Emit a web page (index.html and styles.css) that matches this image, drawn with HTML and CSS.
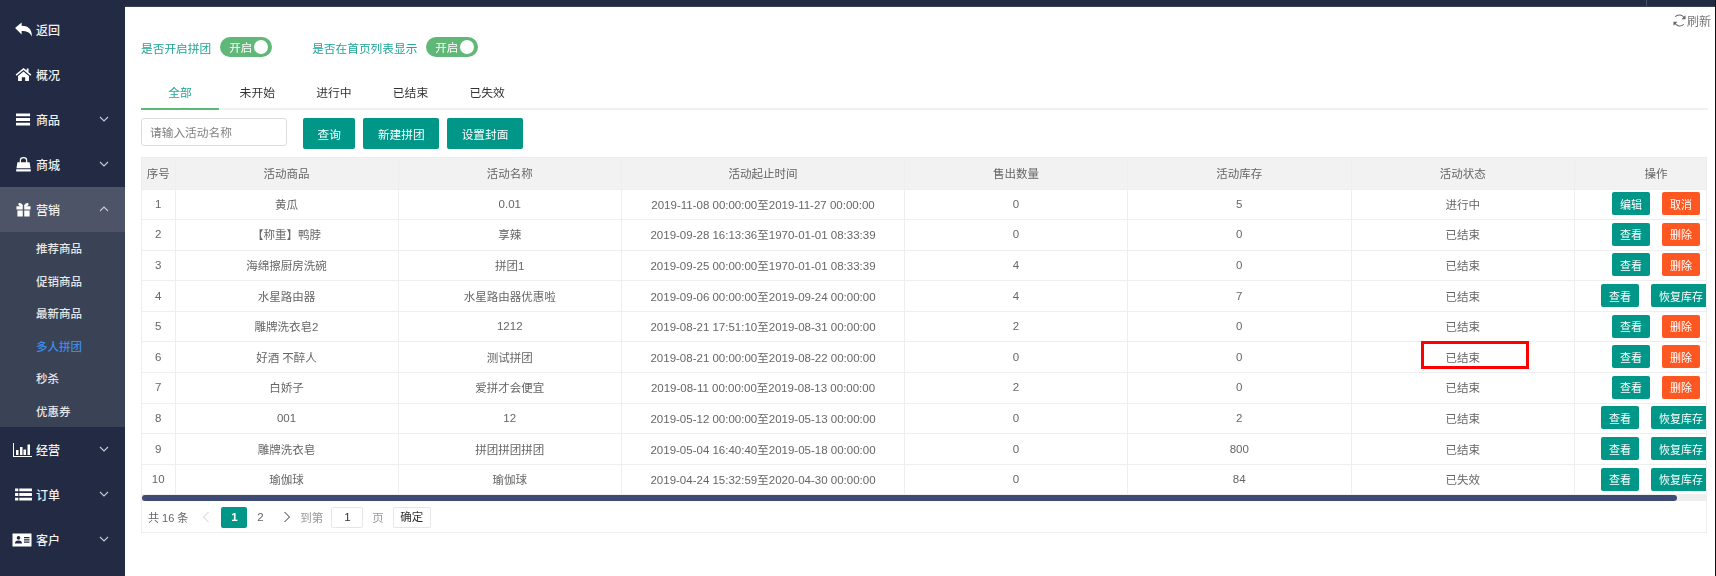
FILE: index.html
```html
<!DOCTYPE html>
<html lang="zh-CN">
<head>
<meta charset="utf-8">
<title>多人拼团</title>
<link rel="stylesheet" href="styles.css">
</head>
<body>
<div class="page">
<aside class="sidebar">
  <a class="nav"><svg class="ico" viewBox="0 0 18 16"><path d="M0 6.500 7 .5v3.400c6.500 0 11 2.900 11 11.600-2-4.300-5.200-5.900-11-5.900v3.600z"/></svg><span>返回</span></a>
  <a class="nav"><svg class="ico" viewBox="0 0 18 16"><path d="M9 1 .6 8l1 1.200L9 3.200l7.400 6 1-1.200-3-2.500V1.600h-2v2.200zM3.200 9.600 9 4.800l5.800 4.800V15h-4v-4H7.200v4h-4z"/></svg><span>概况</span></a>
  <a class="nav"><svg class="ico" viewBox="0 0 18 16"><path d="M1 1.500h15v3H1zM1 6.500h15v3H1zM1 11.500h15v3H1z"/></svg><span>商品</span><svg class="chev" viewBox="0 0 10 6"><path d="M1 1l4 4 4-4"/></svg></a>
  <a class="nav"><svg class="ico" viewBox="0 0 18 16"><path d="M5 6V3.500a4 3.500 0 0 1 8 0V6h-1.300V3.500a2.700 2.300 0 0 0-5.400 0V6zM2.500 5.500h13l1 6.500H1.500zM1.200 13h15.600v2.500H1.200z"/></svg><span>商城</span><svg class="chev" viewBox="0 0 10 6"><path d="M1 1l4 4 4-4"/></svg></a>
  <a class="nav nav-open"><svg class="ico" viewBox="0 0 18 16"><path d="M1.500 4.500h6.700v3.500H1.500zM9.800 4.500h6.700v3.500H9.800zM2.500 9h5.700v6.500H2.500zM9.800 9h5.700v6.500H9.800zM8.300 4.500C6 4.500 3.500 4 3.500 2.300 3.500.5 6.500.2 8.300 3.500zM9.700 4.500c2.300 0 4.800-.5 4.800-2.200C14.500.5 11.500.2 9.700 3.500z"/></svg><span>营销</span><svg class="chev" viewBox="0 0 10 6"><path d="M1 5l4-4 4 4"/></svg></a>
  <div class="subnav">
    <a class="sub">推荐商品</a>
    <a class="sub">促销商品</a>
    <a class="sub">最新商品</a>
    <a class="sub sub-on">多人拼团</a>
    <a class="sub">秒杀</a>
    <a class="sub">优惠券</a>
  </div>
  <a class="nav"><svg class="ico ico-wide" viewBox="0 0 20 16"><path d="M1 1h1v13h18v1H1zM4 8h2.500v5H4zM8 5h2.500v8H8zM11.500 7.500H14V13h-2.500zM15.500 2.500H18V13h-2.500z"/></svg><span>经营</span><svg class="chev" viewBox="0 0 10 6"><path d="M1 1l4 4 4-4"/></svg></a>
  <a class="nav"><svg class="ico" viewBox="0 0 18 16"><path d="M0 1.500h3.500v3H0zM4.500 1.500H18v3H4.500zM0 6.500h3.500v3H0zM4.500 6.500H18v3H4.500zM0 11.500h3.500v3H0zM4.500 11.500H18v3H4.500z"/></svg><span>订单</span><svg class="chev" viewBox="0 0 10 6"><path d="M1 1l4 4 4-4"/></svg></a>
  <a class="nav"><svg class="ico ico-wide" viewBox="0 0 20 16"><path fill-rule="evenodd" d="M.5 1.500h19v13H.5zM6.500 4a1.800 1.800 0 1 0 .01 0zM3 11.500h7c0-2-1-3-3.500-3s-3.500 1-3.500 3zM12 5v1.200h5.500V5zM12 7.300v1.200h5.500V7.300zM12 9.600v1.200h5.500V9.600z"/></svg><span>客户</span><svg class="chev" viewBox="0 0 10 6"><path d="M1 1l4 4 4-4"/></svg></a>
</aside>
<main class="main">
  <div class="topbar"><i class="topbar-sep"></i></div>
  <div class="content">
    <div class="refresh-row">
      <span class="refresh"><svg class="refresh-ico" viewBox="0 0 14 14"><path d="M12.300 5A5.800 5.800 0 0 0 2.400 3M1.700 9a5.800 5.800 0 0 0 9.900 2"/><path class="tip" d="M13.500 1.300v4.400H9.100zM.5 12.700V8.300h4.400z"/></svg>刷新</span>
    </div>
    <div class="switches">
      <span class="sw-label">是否开启拼团</span>
      <span class="switch">开启<i class="knob"></i></span>
      <span class="sw-label sw-label-2">是否在首页列表显示</span>
      <span class="switch">开启<i class="knob"></i></span>
    </div>
    <div class="tabs">
      <span class="tab tab-on">全部</span>
      <span class="tab">未开始</span>
      <span class="tab">进行中</span>
      <span class="tab">已结束</span>
      <span class="tab">已失效</span>
    </div>
    <div class="toolbar">
      <input class="search" placeholder="请输入活动名称">
      <button class="btn btn-first">查询</button>
      <button class="btn">新建拼团</button>
      <button class="btn">设置封面</button>
    </div>
    <div class="table-wrap">
      <div class="table-scroll">
        <table class="grid">
          <colgroup>
            <col class="c1"><col class="c2"><col class="c3"><col class="c4"><col class="c5"><col class="c6"><col class="c7"><col class="c8">
          </colgroup>
          <thead>
            <tr><th>序号</th><th>活动商品</th><th>活动名称</th><th>活动起止时间</th><th>售出数量</th><th>活动库存</th><th>活动状态</th><th>操作</th></tr>
          </thead>
          <tbody>
            <tr><td>1</td><td>黄瓜</td><td>0.01</td><td>2019-11-08 00:00:00至2019-11-27 00:00:00</td><td>0</td><td>5</td><td>进行中</td><td><div class="ops"><button class="mini">编辑</button><button class="mini mini-red">取消</button></div></td></tr>
            <tr><td>2</td><td>【称重】鸭脖</td><td>享辣</td><td>2019-09-28 16:13:36至1970-01-01 08:33:39</td><td>0</td><td>0</td><td>已结束</td><td><div class="ops"><button class="mini">查看</button><button class="mini mini-red">删除</button></div></td></tr>
            <tr><td>3</td><td>海绵擦厨房洗碗</td><td>拼团1</td><td>2019-09-25 00:00:00至1970-01-01 08:33:39</td><td>4</td><td>0</td><td>已结束</td><td><div class="ops"><button class="mini">查看</button><button class="mini mini-red">删除</button></div></td></tr>
            <tr><td>4</td><td>水星路由器</td><td>水星路由器优惠啦</td><td>2019-09-06 00:00:00至2019-09-24 00:00:00</td><td>4</td><td>7</td><td>已结束</td><td><div class="ops"><button class="mini">查看</button><button class="mini">恢复库存</button></div></td></tr>
            <tr><td>5</td><td>雕牌洗衣皂2</td><td>1212</td><td>2019-08-21 17:51:10至2019-08-31 00:00:00</td><td>2</td><td>0</td><td>已结束</td><td><div class="ops"><button class="mini">查看</button><button class="mini mini-red">删除</button></div></td></tr>
            <tr><td>6</td><td>好酒 不醉人</td><td>测试拼团</td><td>2019-08-21 00:00:00至2019-08-22 00:00:00</td><td>0</td><td>0</td><td>已结束</td><td><div class="ops"><button class="mini">查看</button><button class="mini mini-red">删除</button></div></td></tr>
            <tr><td>7</td><td>白娇子</td><td>爱拼才会便宜</td><td>2019-08-11 00:00:00至2019-08-13 00:00:00</td><td>2</td><td>0</td><td>已结束</td><td><div class="ops"><button class="mini">查看</button><button class="mini mini-red">删除</button></div></td></tr>
            <tr><td>8</td><td>001</td><td>12</td><td>2019-05-12 00:00:00至2019-05-13 00:00:00</td><td>0</td><td>2</td><td>已结束</td><td><div class="ops"><button class="mini">查看</button><button class="mini">恢复库存</button></div></td></tr>
            <tr><td>9</td><td>雕牌洗衣皂</td><td>拼团拼团拼团</td><td>2019-05-04 16:40:40至2019-05-18 00:00:00</td><td>0</td><td>800</td><td>已结束</td><td><div class="ops"><button class="mini">查看</button><button class="mini">恢复库存</button></div></td></tr>
            <tr><td>10</td><td>瑜伽球</td><td>瑜伽球</td><td>2019-04-24 15:32:59至2020-04-30 00:00:00</td><td>0</td><td>84</td><td>已失效</td><td><div class="ops"><button class="mini">查看</button><button class="mini">恢复库存</button></div></td></tr>
          </tbody>
        </table>
      </div>
      <div class="hbar"><i class="hbar-thumb"></i></div>
      <div class="pager">
        <span class="pg-count">共 16 条</span>
        <svg class="pg-arrow pg-arrow-off" viewBox="0 0 8 12"><path d="M6.500 1 1.500 6l5 5"/></svg>
        <span class="pg-num pg-num-on">1</span>
        <span class="pg-num">2</span>
        <svg class="pg-arrow" viewBox="0 0 8 12"><path d="M1.500 1l5 5-5 5"/></svg>
        <span class="pg-text">到第</span>
        <span class="pg-input">1</span>
        <span class="pg-text">页</span>
        <span class="pg-ok">确定</span>
      </div>
      <i class="mark"></i>
    </div>
  </div>
</main>
</div>
</body>
</html>
```
FILE: styles.css
```css
* { box-sizing: border-box; }
html, body { margin: 0; padding: 0; height: 100%; overflow: hidden; }
body {
  font-family: "Liberation Sans", "Noto Sans CJK SC", sans-serif;
  font-size: 12px;
  color: #666;
  background: #fff;
}
.page { display: flex; width: 1716px; height: 576px; filter: blur(0.35px); }

/* sidebar */
.sidebar { width: 125px; flex: none; background: #222a44; padding-top: 7px; }
.nav {
  display: flex; align-items: center; height: 45px; padding-left: 15px;
  color: #f0f0f0; font-size: 12px; font-weight: 500; position: relative;
}
.nav span { margin-left: 4px; }
.nav-open { background: #4e5467; }
.ico { width: 17px; height: 15px; fill: #fff; flex: none; }
.ico-wide { width: 20px; height: 16px; margin-left: -3px; }
.chev {
  position: absolute; left: 99px; top: 19px; width: 10px; height: 6px;
  fill: none; stroke: #c9ccd4; stroke-width: 1.1;
}
.subnav { background: #3a4256; height: 195px; }
.sub {
  display: flex; align-items: center; height: 32.5px; padding-left: 36px;
  color: #e6e6e6; font-size: 11.5px; font-weight: 500;
}
.sub-on { color: #3d8be8; }

/* main */
.main { flex: 1; min-width: 0; display: flex; flex-direction: column; border-right: 1px solid #111; }
.topbar { height: 7px; flex: none; background: #222a44; border-bottom: 1px solid #3a4256; display: flex; justify-content: flex-end; }
.topbar-sep { width: 69px; height: 6px; border-left: 1px solid #4e5467; }
.content { padding: 0 7px 0 16px; flex: 1; position: relative; }
.refresh-row { display: flex; justify-content: flex-end; height: 30px; padding-top: 5px; margin-right: -3px; }
.refresh { display: flex; align-items: center; height: 16px; color: #777; font-size: 12px; }
.refresh-ico { width: 13px; height: 13px; margin-right: 1px; fill: none; stroke: #666; stroke-width: 1.1; }
.refresh-ico .tip { fill: #666; stroke: none; }

.switches { display: flex; align-items: center; height: 20px; }
.sw-label { color: #1fa594; font-size: 11.7px; }
.sw-label-2 { margin-left: 40px; }
.switch {
  display: flex; align-items: center; justify-content: space-between;
  width: 52px; height: 20px; margin-left: 9px; padding: 0 4px 1px 9px;
  border-radius: 10px; background: #5fb878; color: #fff; font-size: 11.5px;
}
.knob { width: 14px; height: 14px; border-radius: 50%; background: #fff; margin-top: 1px; }

.tabs { display: flex; height: 33px; margin-top: 20px; border-bottom: 2px solid #f0f0f0; }
.tab { flex: none; width: 76.6px; height: 33px; text-align: center; line-height: 33px; color: #333; font-size: 11.8px; }
.tab-on { width: 78px; color: #1fa594; border-bottom: 2px solid #5fb878; }

.toolbar { display: flex; align-items: flex-start; margin-top: 8px; }
.search {
  width: 146px; height: 28px; padding: 0 8px; border: 1px solid #dcdcdc; border-radius: 3px;
  font: 11.7px "Liberation Sans", "Noto Sans CJK SC", sans-serif; color: #666; outline: none;
}
.search::placeholder { color: #808080; }
.btn {
  height: 31px; padding: 0 14.5px; margin-left: 8px; border: 0; border-radius: 2px;
  background: #009688; color: #fff; font: 11.7px "Liberation Sans", "Noto Sans CJK SC", sans-serif;
}
.btn-first { margin-left: 16px; }

.table-wrap { margin-top: 8px; width: 1566px; position: relative; }
.table-scroll { overflow: hidden; border: 1px solid #eee; border-bottom: 0; }
.hbar { height: 6px; background: #eee; border-left: 1px solid #eee; }
.hbar-thumb { display: block; width: 1535px; height: 6px; background: #3f4a75; border-radius: 3px; }
.grid { table-layout: fixed; border-collapse: collapse; width: 1595px; }
.c1 { width: 33px; } .c2 { width: 223px; } .c3 { width: 223.5px; } .c4 { width: 283px; }
.c5 { width: 223px; } .c6 { width: 223.5px; } .c7 { width: 223.5px; } .c8 { width: 162.5px; }
.grid th, .grid td {
  height: 30.6px; padding: 0 0 1px; text-align: center; font-size: 11.5px; font-weight: 400; color: #666;
  border-right: 1px solid #eee; border-bottom: 1px solid #eee; white-space: nowrap;
}
.grid th { background: #f2f2f2; height: 31px; }
.grid td:last-child, .grid th:last-child { border-right: 0; }
.ops { display: flex; justify-content: center; gap: 12px; }
.mini {
  height: 23px; padding: 0 8px; border: 0; border-radius: 2px; background: #009688; color: #fff;
  font: 11px "Liberation Sans", "Noto Sans CJK SC", sans-serif; flex: none;
}
.mini-red { background: #ff5722; }

.pager {
  display: flex; align-items: center; height: 32px; padding: 1px 0 0 6px;
  border: 1px solid #eee; border-top: 0; font-size: 11.5px; color: #666;
}
.pg-count { font-size: 11px; }
.pg-arrow { width: 8px; height: 12px; fill: none; stroke: #333; stroke-width: 1; flex: none; }
.pg-arrow-off { stroke: #ccc; margin-left: 14px; }
.pg-num { width: 26px; height: 21px; line-height: 21px; text-align: center; }
.pg-num-on { margin-left: 11px; background: #009688; color: #fff; border-radius: 2px; font-weight: 700; }
.pg-num + .pg-arrow { margin-left: 10px; }
.pg-text { color: #999; margin-left: 9px; flex: none; }
.pg-input {
  width: 32px; height: 21px; line-height: 19px; margin-left: 8px; text-align: center;
  border: 1px solid #e6e6e6; border-radius: 2px; color: #333;
}
.pg-ok {
  width: 38px; height: 21px; line-height: 19px; margin-left: 9px; text-align: center;
  border: 1px solid #e6e6e6; border-radius: 2px; color: #333;
}
.mark { position: absolute; left: 1280px; top: 184px; width: 108px; height: 28px; border: 3px solid #f00; }
```
